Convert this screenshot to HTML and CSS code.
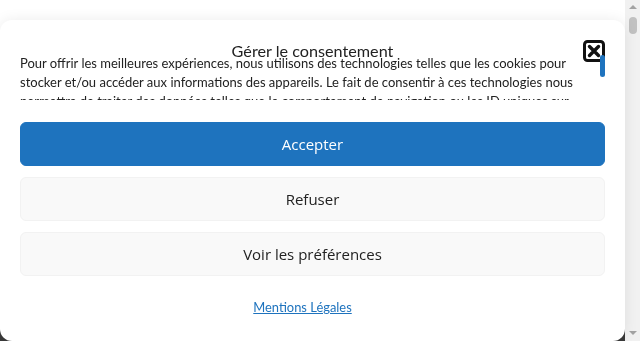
FILE: index.html
```html
<!DOCTYPE html>
<html lang="fr">
<head>
    <meta charset="UTF-8">
    <meta name="viewport" content="width=device-width, initial-scale=1.0">
    <title>Gérer le consentement</title>
    <link rel="stylesheet" href="styles.css">
</head>
<body>
    <div class="page">
        <div class="page-footer"></div>
    </div>

    <!-- barre de défilement de la page -->
    <div class="page-scrollbar">
        <span class="arrow up"></span>
        <span class="thumb"></span>
        <span class="arrow down"></span>
    </div>

    <div class="cookie-banner">
        <div class="header">
            <span class="spacer"></span>
            <div class="title">Gérer le consentement</div>
            <div class="close" title="Fermer">
                <svg width="22" height="22" viewBox="0 0 22 22">
                    <rect x="1.5" y="1.5" width="19" height="19" rx="3" fill="none" stroke="#111" stroke-width="3"/>
                    <path d="M6.5 6.5 L15.5 15.5 M15.5 6.5 L6.5 15.5" stroke="#111" stroke-width="3.4" stroke-linecap="round"/>
                </svg>
            </div>
        </div>
        <div class="message-wrap">
            <div class="message">
                Pour offrir les meilleures expériences, nous utilisons des technologies telles que les cookies pour stocker et/ou accéder aux informations des appareils. Le fait de consentir à ces technologies nous permettra de traiter des données telles que le comportement de navigation ou les ID uniques sur ce site. Le fait de ne pas consentir ou de retirer son consentement peut avoir un effet négatif sur certaines caractéristiques et fonctions.
            </div>
            <span class="message-thumb"></span>
        </div>
        <div class="buttons">
            <button class="btn accept">Accepter</button>
            <button class="btn deny">Refuser</button>
            <button class="btn prefs">Voir les préférences</button>
        </div>
        <div class="links">
            <a href="#">Mentions Légales</a>
        </div>
    </div>
</body>
</html>
```

FILE: styles.css
```css
html, body {
    margin: 0;
    padding: 0;
}

body {
    height: 100vh;
    overflow: hidden;
    background-color: #fff;
    font-family: Lato, "Open Sans", sans-serif;
}

.page-footer {
    position: fixed;
    left: 0;
    right: 15px;
    bottom: 0;
    height: 14px;
    background-color: #3a3a3a;
}

.page-scrollbar {
    position: fixed;
    top: 0;
    right: 0;
    bottom: 0;
    width: 15px;
    background-color: #f1f1f1;
    display: flex;
    flex-direction: column;
    align-items: center;
}

.page-scrollbar .arrow {
    width: 0;
    height: 0;
    border-left: 4px solid transparent;
    border-right: 4px solid transparent;
}

.page-scrollbar .arrow.up {
    margin-top: 5px;
    border-bottom: 4px solid #a3a3a3;
}

.page-scrollbar .arrow.down {
    margin-top: auto;
    margin-bottom: 6px;
    border-top: 4px solid #a3a3a3;
}

.page-scrollbar .thumb {
    margin-top: 8px;
    width: 8px;
    height: 17px;
    border-radius: 4px;
    background-color: #c1c1c1;
}

.cookie-banner {
    position: fixed;
    top: 20px;
    left: 0;
    right: 15px;
    height: 321px;
    box-sizing: border-box;
    padding: 20px 20px 0 20px;
    background-color: #fff;
    border-radius: 12px;
    box-shadow: 0 0 14px rgba(0, 0, 0, 0.08);
    color: #222;
}

.header {
    display: grid;
    grid-template-columns: 22px 1fr 22px;
    height: 22px;
}

.title {
    text-align: center;
    font-size: 16.2px;
    line-height: 22px;
    color: #222;
}

.close {
    width: 22px;
    height: 22px;
    cursor: pointer;
}

.close svg {
    display: block;
}

.message-wrap {
    position: relative;
    margin-top: -8px;
}

.message {
    height: 46px;
    overflow: hidden;
    padding-right: 25px;
    font-size: 13px;
    line-height: 19px;
}

.message-thumb {
    position: absolute;
    top: 1px;
    right: 0;
    width: 5px;
    height: 22px;
    border-radius: 3px;
    background-color: #1e73be;
}

.buttons {
    display: flex;
    flex-direction: column;
    gap: 11px;
    margin-top: 22px;
}

.btn {
    height: 44px;
    width: 100%;
    border-radius: 6px;
    font-family: "Open Sans", "Noto Sans", sans-serif;
    font-size: 15px;
    cursor: pointer;
}

.accept {
    background-color: #1e73be;
    border: 1px solid #1e73be;
    color: #fff;
}

.deny,
.prefs {
    background-color: #f9f9f9;
    border: 1px solid #f2f2f2;
    color: #222;
}

.links {
    margin-top: 23px;
    padding-right: 20px;
    text-align: center;
    font-size: 12.9px;
    line-height: 16px;
}

.links a {
    color: #1e73be;
}
```
